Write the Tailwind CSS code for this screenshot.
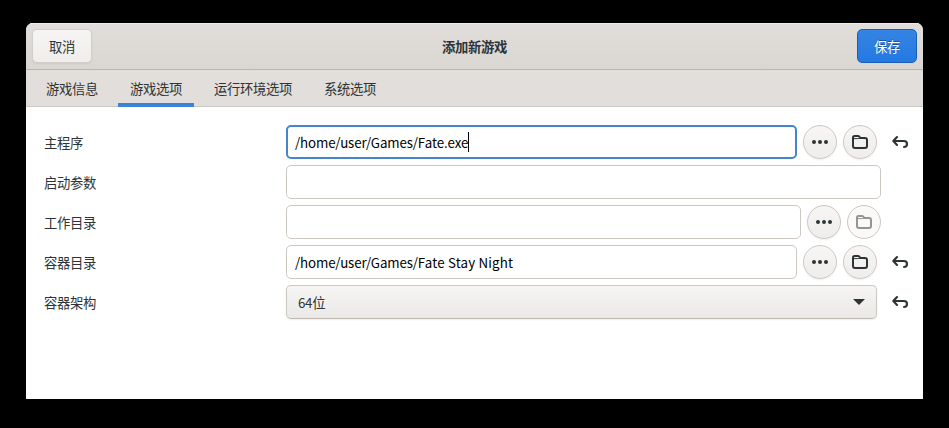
<!DOCTYPE html>
<html lang="zh-CN">
<head>
<meta charset="utf-8">
<title>添加新游戏</title>
<script src="https://cdn.jsdelivr.net/npm/@tailwindcss/browser@4"></script>
</head>
<body class="bg-black w-[949px] h-[428px] overflow-hidden pt-[23px] pl-[26px] font-['Noto_Sans_CJK_SC',sans-serif] text-[13.33px] tracking-[-0.33px] leading-5 text-[#2e3436]">
<svg class="hidden">
  <symbol id="dots" viewBox="0 0 16 16"><g fill="currentColor"><circle cx="2" cy="8" r="2"/><circle cx="8" cy="8" r="2"/><circle cx="14" cy="8" r="2"/></g></symbol>
  <symbol id="folder" viewBox="0 0 16 16"><path d="M1 12V3.6Q1 2 2.6 2H6.2Q7.2 2 7.6 3L8.2 4H13Q15 4 15 6V12Q15 14 13 14H3Q1 14 1 12Z" fill="none" stroke="currentColor" stroke-width="2"/><path d="M1.5 4.6H5.8Q7 4.6 8 3.8" fill="none" stroke="currentColor" stroke-width="1"/></symbol>
  <symbol id="undo" viewBox="0 0 16 16"><path d="M5 3L1.3 7L5 11M2 7H12Q15 7 15 10T12 13" fill="none" stroke="currentColor" stroke-width="2.1" stroke-linecap="round" stroke-linejoin="round"/></symbol>
</svg>
<main class="w-[897px] h-[376px] bg-white rounded-t-[7px] overflow-hidden">
  <header class="h-[47px] border-b border-[#b9b5b1] bg-linear-to-b from-[#e1dedb] to-[#dad6d2] shadow-[inset_0_1px_#efedeb] flex items-center justify-between px-1.5">
    <button class="w-[60px] h-[34px] pt-0.5 rounded-[5px] border border-[#d3cec9] bg-linear-to-b from-[#f6f5f4] to-[#f0eeec] shadow-[0_1px_2px_#00000012]">取消</button>
    <h1 class="font-bold pt-0.5">添加新游戏</h1>
    <button class="w-[60px] h-[34px] pt-0.5 rounded-[5px] border border-[#1b5fb4] bg-linear-to-b from-[#3584e4] to-[#2379e2] text-white [text-shadow:0_-1px_#0000005a]">保存</button>
  </header>
  <nav class="h-[37px] bg-[#e1dedb] border-b border-[#cbc7c3] px-2 flex gap-2">
    <div class="h-[37px] px-3 pt-[9px]">游戏信息</div>
    <div class="h-[37px] px-3 pt-[9px] border-b-4 border-[#3b82d8]">游戏选项</div>
    <div class="h-[37px] px-3 pt-[9px]">运行环境选项</div>
    <div class="h-[37px] px-3 pt-[9px]">系统选项</div>
  </nav>
  <section class="pt-[18px] pl-[18px] flex flex-col gap-1.5">
    <div class="flex h-[34px] items-center">
      <label class="w-[242px] pt-0.5">主程序</label>
      <div class="w-[511px] h-[34px] rounded-[5px] border-2 border-[#4585cd] pl-[7px] flex items-center text-black"><span class="pt-0.5 tracking-[-0.15px]">/home/user/Games/</span><span class="pt-0.5 tracking-[-0.05px]">Fate.exe</span><i class="w-px h-5 bg-black"></i></div>
      <button class="ml-1.5 size-[34px] rounded-full border border-[#cdc7c2] bg-linear-to-b from-[#f7f6f5] to-[#efedeb] shadow-[0_1px_2px_#00000012] grid place-items-center"><svg class="size-4"><use href="#dots"/></svg></button>
      <button class="ml-1.5 size-[34px] rounded-full border border-[#cdc7c2] bg-linear-to-b from-[#f7f6f5] to-[#efedeb] shadow-[0_1px_2px_#00000012] grid place-items-center"><svg class="size-4"><use href="#folder"/></svg></button>
      <svg class="ml-[15px] size-4"><use href="#undo"/></svg>
    </div>
    <div class="flex h-[34px] items-center">
      <label class="w-[242px] pt-0.5">启动参数</label>
      <div class="w-[595px] h-[34px] rounded-[5px] border border-[#cdc7c2]"></div>
    </div>
    <div class="flex h-[34px] items-center">
      <label class="w-[242px] pt-0.5">工作目录</label>
      <div class="w-[515px] h-[34px] rounded-[5px] border border-[#cdc7c2]"></div>
      <button class="ml-1.5 size-[34px] rounded-full border border-[#cdc7c2] bg-linear-to-b from-[#f7f6f5] to-[#efedeb] shadow-[0_1px_2px_#00000012] grid place-items-center"><svg class="size-4"><use href="#dots"/></svg></button>
      <button class="ml-1.5 size-[34px] rounded-full border border-[#cdc7c2] bg-[#faf9f8] text-[#929595] grid place-items-center"><svg class="size-4"><use href="#folder"/></svg></button>
    </div>
    <div class="flex h-[34px] items-center">
      <label class="w-[242px] pt-0.5">容器目录</label>
      <div class="w-[511px] h-[34px] rounded-[5px] border border-[#cdc7c2] pl-2 flex items-center text-black"><span class="pt-0.5 tracking-[-0.15px]">/home/user/Games/</span><span class="pt-0.5 tracking-[0.15px]">Fate Stay Night</span></div>
      <button class="ml-1.5 size-[34px] rounded-full border border-[#cdc7c2] bg-linear-to-b from-[#f7f6f5] to-[#efedeb] shadow-[0_1px_2px_#00000012] grid place-items-center"><svg class="size-4"><use href="#dots"/></svg></button>
      <button class="ml-1.5 size-[34px] rounded-full border border-[#cdc7c2] bg-linear-to-b from-[#f7f6f5] to-[#efedeb] shadow-[0_1px_2px_#00000012] grid place-items-center"><svg class="size-4"><use href="#folder"/></svg></button>
      <svg class="ml-[15px] size-4"><use href="#undo"/></svg>
    </div>
    <div class="flex h-[34px] items-center">
      <label class="w-[242px] pt-0.5">容器架构</label>
      <div class="w-[591px] h-[34px] rounded-[5px] border border-[#cdc7c2] border-b-[#bfb8b1] bg-linear-to-b from-[#f6f5f4] to-[#ebe9e7] shadow-[0_1px_2px_#00000012] px-[11px] flex items-center justify-between"><span class="pt-0.5">64位</span><svg class="w-3 h-1.5" viewBox="0 0 12 6"><path d="M0 0H12L6 6Z" fill="#2e3436"/></svg></div>
      <svg class="ml-[15px] size-4"><use href="#undo"/></svg>
    </div>
  </section>
</main>
</body>
</html>
